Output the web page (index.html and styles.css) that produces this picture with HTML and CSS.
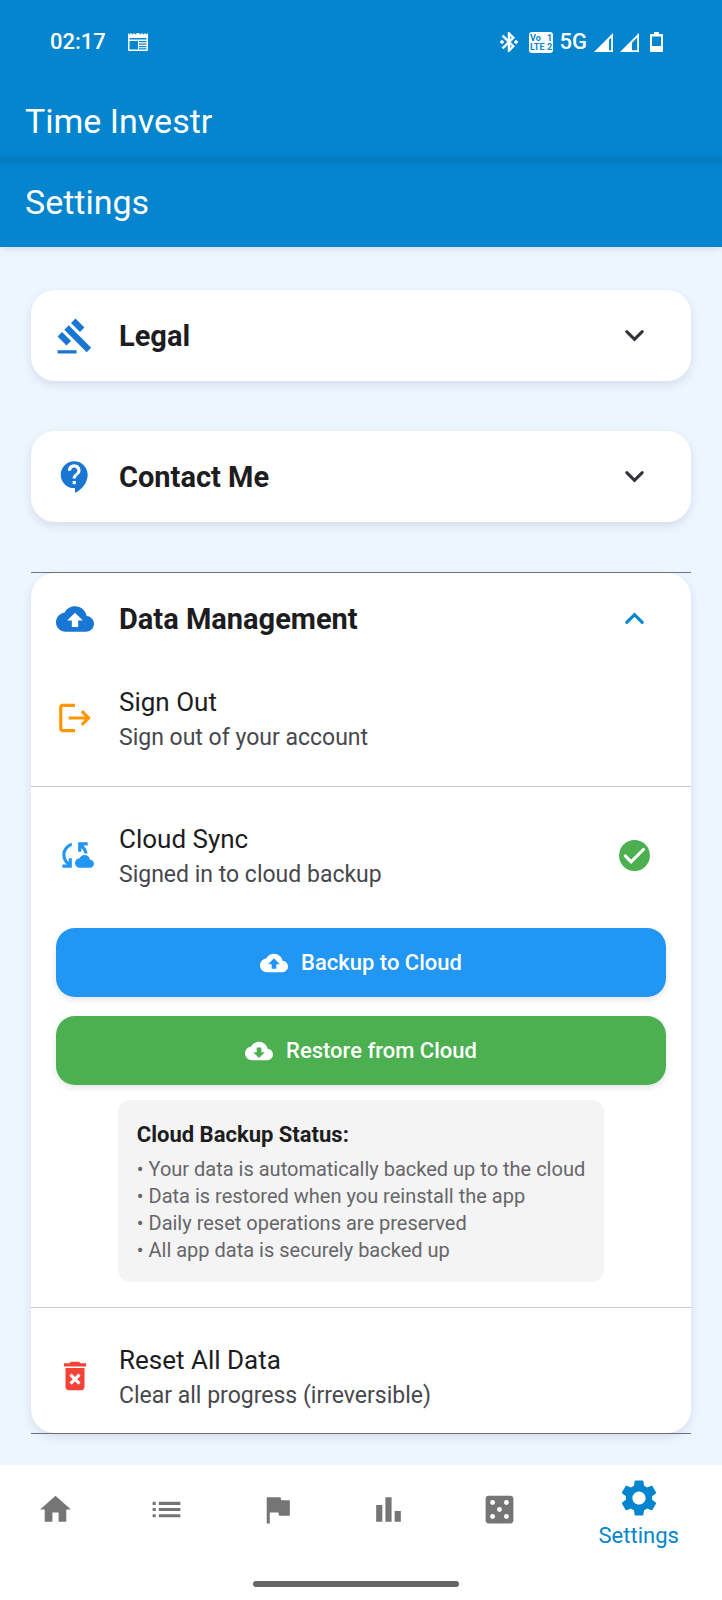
FILE: index.html
```html
<!DOCTYPE html>
<html lang="en">
<head>
<meta charset="utf-8">
<meta name="viewport" content="width=device-width, initial-scale=1">
<title>Time Investr – Settings</title>
<link rel="stylesheet" href="styles.css">
</head>
<body>
<header class="app-bar">
  <div class="status">
    <span class="status-time">02:17</span>
    <svg class="status-calendar" viewBox="0 0 20 18" aria-hidden="true">
      <path fill="#fff" fill-rule="evenodd" d="M0 0l1.500 1.500L3 0l1.500 1.500L6 0l1.500 1.500L9 0h2l1.500 1.500L14 0l1.500 1.500L17 0l1.500 1.500L20 0v16.500a1.500 1.500 0 0 1-1.500 1.500h-17A1.500 1.500 0 0 1 0 16.500zM1.500 5v1.500h17V5zM1.500 8v8.500H10V8zM11 8v1.200h7.500V8zm0 2.500v1.200h7.500v-1.200zm0 2.500v1.200h7.500V13zm0 2.300v1.200h7.500v-1.200z"/>
    </svg>
    <div class="status-right">
      <svg class="status-bluetooth" viewBox="3 2 18 20" aria-hidden="true"><path fill="#fff" stroke="#fff" stroke-width=".5" d="M7 12l-2-2-2 2 2 2 2-2zm10.710-4.290L12 2h-1v7.590L6.410 5 5 6.410 10.590 12 5 17.590 6.410 19 11 14.410V22h1l5.710-5.710-4.300-4.290 4.300-4.290zM13 5.830l1.880 1.880L13 9.590V5.830zm1.880 10.460L13 18.170v-3.760l1.880 1.880zM19 10l-2 2 2 2 2-2-2-2z"/></svg>
      <svg class="status-volte" viewBox="0 0 24 21" aria-hidden="true">
        <rect width="24" height="21" rx="3" fill="#fff"/>
        <text class="volte-text" x="1" y="9">Vo</text>
        <text class="volte-text" x="18" y="9">1</text>
        <text class="volte-text" x="1" y="18">LTE</text>
        <text class="volte-text" x="18" y="18">2</text>
      </svg>
      <span class="status-network">5G</span>
      <svg class="status-signal" viewBox="0 0 19 19" aria-hidden="true"><path fill="#fff" fill-rule="evenodd" d="M19 0v19H0zM17.200 4.500L15 6.700v10.600h2.200z"/></svg>
      <svg class="status-signal" viewBox="0 0 19 19" aria-hidden="true"><path fill="#fff" fill-rule="evenodd" d="M19 0v19H0zM17.200 4.500L12 9.700v7.600h5.200z"/></svg>
      <svg class="status-battery" viewBox="0 0 13 20" aria-hidden="true"><path fill="#fff" fill-rule="evenodd" d="M4 0h5v2h3a1 1 0 0 1 1 1v16a1 1 0 0 1-1 1H1a1 1 0 0 1-1-1V3a1 1 0 0 1 1-1h3zM2 4.500V14h9V4.500z"/></svg>
    </div>
  </div>
  <h1 class="bar-title">Time Investr</h1>
</header>
<div class="page-bar"><h2 class="bar-title">Settings</h2></div>

<main class="content">
  <section class="card">
    <button class="card-head" type="button" aria-expanded="false">
      <svg class="icon-lead" viewBox="0 0 24 24" aria-hidden="true"><path d="M1 21h12v2H1zM5.245 8.070l2.830-2.827 14.140 14.142-2.828 2.828zM12.317 1l5.657 5.656-2.830 2.830-5.654-5.660zM3.825 9.485l5.657 5.657-2.828 2.828-5.657-5.657z"/></svg>
      <span class="card-title">Legal</span>
      <svg class="chevron" viewBox="0 0 24 24" aria-hidden="true"><path d="M7 9.500l5 5 5-5"/></svg>
    </button>
  </section>

  <section class="card">
    <button class="card-head" type="button" aria-expanded="false">
      <svg class="icon-lead" viewBox="0 0 24 24" aria-hidden="true"><path d="M11.500 2C6.810 2 3 5.810 3 10.500S6.810 19 11.500 19h.5v3c4.860-2.340 8-7 8-11.500C20 5.810 16.190 2 11.500 2zm1 14.500h-2v-2h2v2zm0-3.500h-2c0-3.250 3-3 3-5 0-1.100-.9-2-2-2s-2 .9-2 2h-2c0-2.210 1.790-4 4-4s4 1.790 4 4c0 2.500-3 2.750-3 5z"/></svg>
      <span class="card-title">Contact Me</span>
      <svg class="chevron" viewBox="0 0 24 24" aria-hidden="true"><path d="M7 9.500l5 5 5-5"/></svg>
    </button>
  </section>

  <div class="expanded">
    <section class="card">
      <button class="card-head" type="button" aria-expanded="true">
        <svg class="icon-lead" viewBox="0 0 24 24" aria-hidden="true"><path d="M19.350 10.040C18.670 6.590 15.640 4 12 4 9.110 4 6.600 5.640 5.350 8.040 2.340 8.360 0 10.910 0 14c0 3.310 2.690 6 6 6h13c2.760 0 5-2.240 5-5 0-2.640-2.050-4.780-4.650-4.960zM14 13v4h-4v-4H7l5-5 5 5h-3z"/></svg>
        <span class="card-title">Data Management</span>
        <svg class="chevron chevron-open" viewBox="0 0 24 24" aria-hidden="true"><path d="M7 14.500l5-5 5 5"/></svg>
      </button>

      <button class="tile tile-first" type="button">
        <svg class="icon-lead orange" viewBox="0 0 24 24" aria-hidden="true"><path d="M17 7l-1.410 1.410L18.170 11H8v2h10.170l-2.580 2.580L17 17l5-5zM4 5h8V3H4c-1.100 0-2 .9-2 2v14c0 1.100.9 2 2 2h8v-2H4V5z"/></svg>
        <span class="tile-text">
          <span class="tile-title">Sign Out</span>
          <span class="tile-sub">Sign out of your account</span>
        </span>
      </button>

      <hr class="rule">

      <div class="tile tile-sync">
        <svg class="icon-lead blue" viewBox="0 0 24 24" aria-hidden="true"><path d="M21.500 14.980c-.02 0-.03 0-.05.010C21.200 13.300 19.760 12 18 12c-1.400 0-2.600.83-3.160 2.020C13.260 14.100 12 15.400 12 17c0 1.660 1.340 3 3 3l6.500-.02c1.380 0 2.500-1.120 2.500-2.500s-1.120-2.500-2.500-2.500zM10 4.260v2.090C7.670 7.180 6 9.390 6 12c0 1.770.78 3.340 2 4.440V14h2v6H4v-2h2.730C5.060 16.540 4 14.400 4 12c0-3.730 2.550-6.850 6-7.740zM20 6h-2.730c1.430 1.260 2.410 3.010 2.660 5h-2.020c-.23-1.360-.93-2.550-1.910-3.440V10h-2V4h6v2z"/></svg>
        <span class="tile-text">
          <span class="tile-title">Cloud Sync</span>
          <span class="tile-sub">Signed in to cloud backup</span>
        </span>
        <svg class="check" viewBox="0 0 24 24" role="img" aria-label="Signed in"><circle cx="12" cy="12" r="10" fill="#4caf50"/><path d="M6 12.300l3.800 3.800 8-8" fill="none" stroke="#fff" stroke-width="2" stroke-linecap="round"/></svg>
      </div>

      <div class="actions">
        <button class="action action-backup" type="button">
          <svg class="icon-action" viewBox="0 0 24 24" aria-hidden="true"><path d="M19.350 10.040C18.670 6.590 15.640 4 12 4 9.110 4 6.600 5.640 5.350 8.040 2.340 8.360 0 10.910 0 14c0 3.310 2.690 6 6 6h13c2.760 0 5-2.240 5-5 0-2.640-2.050-4.780-4.650-4.960zM14 13v4h-4v-4H7l5-5 5 5h-3z"/></svg>
          Backup to Cloud
        </button>
        <button class="action action-restore" type="button">
          <svg class="icon-action" viewBox="0 0 24 24" aria-hidden="true"><path d="M19.350 10.040C18.670 6.590 15.640 4 12 4 9.110 4 6.600 5.640 5.350 8.040 2.340 8.360 0 10.910 0 14c0 3.310 2.690 6 6 6h13c2.760 0 5-2.240 5-5 0-2.640-2.050-4.780-4.650-4.960zM17 13l-5 5-5-5h3V9h4v4h3z"/></svg>
          Restore from Cloud
        </button>
      </div>

      <div class="backup-status">
        <h3 class="backup-title">Cloud Backup Status:</h3>
        <ul class="backup-list">
          <li>• Your data is automatically backed up to the cloud</li>
          <li>• Data is restored when you reinstall the app</li>
          <li>• Daily reset operations are preserved</li>
          <li>• All app data is securely backed up</li>
        </ul>
      </div>

      <hr class="rule">

      <button class="tile tile-reset" type="button">
        <svg class="icon-lead red" viewBox="0 0 24 24" aria-hidden="true"><path d="M6 19c0 1.100.9 2 2 2h8c1.100 0 2-.9 2-2V7H6v12zm2.460-7.120l1.410-1.410L12 12.590l2.120-2.120 1.410 1.410L13.410 14l2.120 2.120-1.410 1.410L12 15.410l-2.120 2.120-1.410-1.410L10.590 14l-2.130-2.120zM15.500 4l-1-1h-5l-1 1H5v2h14V4z"/></svg>
        <span class="tile-text">
          <span class="tile-title">Reset All Data</span>
          <span class="tile-sub">Clear all progress (irreversible)</span>
        </span>
      </button>
    </section>
  </div>
</main>

<footer class="bottom">
  <nav class="nav" aria-label="Main">
    <a class="nav-item" href="#home" aria-label="Home"><svg class="nav-icon" viewBox="0 0 24 24" aria-hidden="true"><path d="M10 20v-6h4v6h5v-8h3L12 3 2 12h3v8z"/></svg></a>
    <a class="nav-item" href="#list" aria-label="List"><svg class="nav-icon" viewBox="0 0 24 24" aria-hidden="true"><path d="M3 13h2v-2H3v2zm0 4h2v-2H3v2zm0-8h2V7H3v2zm4 4h14v-2H7v2zm0 4h14v-2H7v2zM7 7v2h14V7H7z"/></svg></a>
    <a class="nav-item" href="#goals" aria-label="Goals"><svg class="nav-icon" viewBox="0 0 24 24" aria-hidden="true"><path d="M14.400 6L14 4H5v17h2v-7h5.600l.4 2h7V6z"/></svg></a>
    <a class="nav-item" href="#stats" aria-label="Statistics"><svg class="nav-icon" viewBox="0 0 24 24" aria-hidden="true"><path d="M4 9h4v11H4zm12 4h4v7h-4zm-6-9h4v16h-4z"/></svg></a>
    <a class="nav-item" href="#dice" aria-label="Dice"><svg class="nav-icon" viewBox="0 0 24 24" aria-hidden="true"><rect x="3" y="3" width="18" height="18" rx="2"/><g fill="#fff"><circle cx="7.500" cy="7.500" r="1.600"/><circle cx="16.500" cy="7.500" r="1.600"/><circle cx="12" cy="12" r="1.600"/><circle cx="7.500" cy="16.500" r="1.600"/><circle cx="16.500" cy="16.500" r="1.600"/></g></svg></a>
    <a class="nav-item nav-current" href="#settings" aria-current="page"><svg class="nav-icon" viewBox="0 0 24 24" aria-hidden="true"><path d="M19.140 12.940c.04-.3.06-.61.06-.94 0-.32-.02-.64-.07-.94l2.030-1.580c.18-.14.23-.41.12-.61l-1.920-3.320c-.12-.22-.37-.29-.59-.22l-2.390.96c-.5-.38-1.030-.7-1.620-.94l-.36-2.540c-.04-.24-.24-.41-.48-.41h-3.840c-.24 0-.43.17-.47.41l-.36 2.540c-.59.24-1.130.57-1.620.94l-2.390-.96c-.22-.08-.47 0-.59.22L2.740 8.870c-.12.21-.08.47.12.61l2.030 1.580c-.05.3-.09.63-.09.94s.02.64.07.94l-2.030 1.580c-.18.14-.23.41-.12.61l1.920 3.320c.12.22.37.29.59.22l2.390-.96c.5.38 1.030.7 1.620.94l.36 2.540c.05.24.24.41.48.41h3.840c.24 0 .44-.17.47-.41l.36-2.540c.59-.24 1.130-.56 1.620-.94l2.390.96c.22.08.47 0 .59-.22l1.920-3.320c.12-.22.07-.47-.12-.61l-2.010-1.580zM12 15.600c-1.980 0-3.600-1.620-3.600-3.600s1.620-3.600 3.600-3.600 3.600 1.620 3.600 3.600-1.620 3.600-3.600 3.600z"/></svg><span>Settings</span></a>
  </nav>
  <div class="gesture-bar"><div class="home-indicator"></div></div>
</footer>
</body>
</html>
```
FILE: styles.css
```css
* {
  box-sizing: border-box;
}

body {
  margin: 0;
  min-height: 100vh;
  display: flex;
  flex-direction: column;
  background: #edf5ff;
  color: #1d1d1f;
  font-family: Roboto, "Liberation Sans", sans-serif;
}

svg {
  display: block;
  flex: none;
}

button {
  font: inherit;
  color: inherit;
  border: 0;
  background: none;
  text-align: left;
  cursor: pointer;
}

.app-bar,
.page-bar {
  background: #0485cd;
  color: #fff;
  padding: 0 25px;
}

.app-bar {
  height: 159px;
}

.page-bar {
  height: 88px;
  padding-top: 23px;
  background-image: linear-gradient(rgba(0, 0, 0, 0.07), rgba(0, 0, 0, 0) 8px);
  box-shadow: 0 1px 8px rgba(0, 0, 0, 0.12);
}

.bar-title {
  margin: 0;
  font-size: 34px;
  line-height: 40px;
  font-weight: 400;
}

.status {
  display: flex;
  align-items: center;
  height: 84px;
  margin-bottom: 17px;
  padding: 0 34px 0 25px;
  font-size: 22px;
  line-height: 28px;
  font-weight: 500;
}

.status-calendar {
  width: 20px;
  height: 18px;
  margin-left: 22px;
}

.status-right {
  display: flex;
  align-items: center;
  gap: 7px;
  margin-left: auto;
}

.status-bluetooth {
  width: 18px;
  height: 20px;
  margin-right: 4px;
}

.status-volte {
  width: 24px;
  height: 21px;
}

.volte-text {
  font-size: 9px;
  font-weight: 700;
  fill: #0485cd;
}

.status-signal {
  width: 19px;
  height: 19px;
}

.status-battery {
  width: 13px;
  height: 20px;
  margin-left: 4px;
}

.content {
  flex: 1;
  display: flex;
  flex-direction: column;
  gap: 50px;
  padding: 43px 31px 31px;
}

.card {
  background: #fff;
  border-radius: 24px;
  box-shadow: 0 4px 10px rgba(30, 30, 60, 0.1);
}

.expanded {
  border-top: 1px solid #70757c;
  border-bottom: 1px solid #70757c;
}

.card-head {
  display: flex;
  align-items: center;
  width: 100%;
  height: 91px;
  padding: 0 38px 0 25px;
}

.icon-lead {
  width: 38px;
  height: 38px;
  fill: #1976d2;
}

.orange {
  fill: #ff9800;
}

.blue {
  fill: #2196f3;
}

.red {
  fill: #f44336;
}

.card-title {
  flex: 1;
  margin-left: 25px;
  font-size: 29px;
  line-height: 36px;
  font-weight: 700;
}

.chevron {
  width: 37px;
  height: 37px;
  fill: none;
  stroke: #33343a;
  stroke-width: 2;
  stroke-linecap: round;
}

.chevron-open {
  stroke: #0485cd;
}

.tile {
  display: flex;
  align-items: center;
  width: 100%;
  padding: 0 38px 0 25px;
}

.tile-first {
  padding-top: 17px;
  padding-bottom: 31px;
}

.tile-sync {
  padding-top: 31px;
  padding-bottom: 36px;
}

.tile-reset {
  padding-top: 31px;
  padding-bottom: 20px;
}

.tile-text {
  flex: 1;
  display: flex;
  flex-direction: column;
  margin-left: 25px;
  padding-top: 2px;
}

.tile-title {
  font-size: 26px;
  line-height: 38px;
}

.tile-sub {
  font-size: 23px;
  line-height: 34px;
  color: #47484d;
}

.check {
  width: 37px;
  height: 37px;
}

.rule {
  height: 1px;
  margin: 0;
  border: 0;
  background: #c3c6cf;
}

.actions {
  display: flex;
  flex-direction: column;
  gap: 19px;
  padding: 0 25px;
}

.action {
  display: flex;
  align-items: center;
  justify-content: center;
  gap: 13px;
  height: 69px;
  border-radius: 19px;
  color: #fff;
  font-size: 22px;
  line-height: 28px;
  font-weight: 500;
  box-shadow: 0 3px 6px rgba(0, 0, 0, 0.1);
}

.action-backup {
  background: #2196f3;
}

.action-restore {
  background: #4caf50;
}

.icon-action {
  width: 28px;
  height: 28px;
  fill: #fff;
}

.backup-status {
  width: fit-content;
  margin: 15px auto 25px;
  padding: 18px 19px;
  border-radius: 12px;
  background: #f4f4f4;
}

.backup-title {
  margin: 0 0 4px;
  font-size: 22px;
  line-height: 34px;
  font-weight: 700;
}

.backup-list {
  margin: 0;
  padding: 0;
  list-style: none;
  font-size: 20px;
  line-height: 27px;
  color: #66666a;
}

.bottom {
  background: #fff;
}

.nav {
  display: flex;
  height: 88px;
}

.nav-item {
  flex: 2;
  display: flex;
  flex-direction: column;
  align-items: center;
  justify-content: center;
  color: #757575;
  text-decoration: none;
}

.nav-icon {
  width: 37px;
  height: 37px;
  fill: currentColor;
}

.nav-current {
  flex: 3;
  padding-top: 9px;
  color: #0485cd;
  font-size: 22px;
  line-height: 32px;
}

.nav-current .nav-icon {
  width: 44px;
  height: 44px;
}

.gesture-bar {
  padding: 28px 10px 13px 0;
}

.home-indicator {
  width: 206px;
  height: 6px;
  margin: 0 auto;
  border-radius: 3px;
  background: #666;
}
```
